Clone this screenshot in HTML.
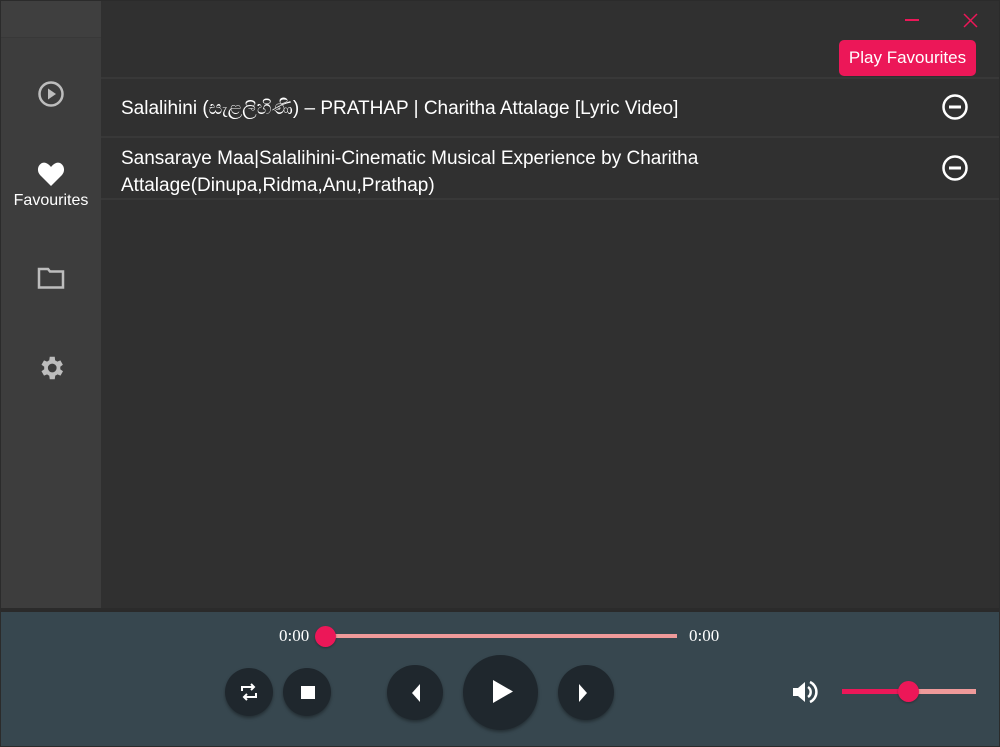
<!DOCTYPE html>
<html><head><meta charset="utf-8"><style>
*{margin:0;padding:0;box-sizing:border-box}
body{width:1000px;height:747px;background:#2b2b2b;font-family:"Liberation Sans","Noto Sans CJK SC",sans-serif;overflow:hidden;position:relative}
.side{position:absolute;left:1px;top:1px;width:100px;height:607px;background:#3d3d3d}
.side .top{height:37px;background:#3f3f3f;border-bottom:1px solid #383838}
.main{position:absolute;left:101px;top:1px;width:898px;height:607px;background:#303030}
.row{position:absolute;left:101px;width:898px;border-top:2px solid #383838;color:#fff;font-size:19px}
.btn{position:absolute;left:839px;top:40px;width:137px;height:36px;background:#ec1758;border-radius:5px;color:#fff;font-size:17px;text-align:center;line-height:36px}
.bar{position:absolute;left:1px;top:610px;width:998px;height:136px;background:#37474f;border-top:2px solid #2a2a2a}
.c{position:absolute;border-radius:50%;background:#1f272d;box-shadow:0 2px 3px rgba(0,0,0,.35)}
.t{position:absolute;color:#fff;font-family:"Liberation Serif",serif;font-size:17px}
</style></head><body>
<div class="side"><div class="top"></div></div>
<div class="main"></div>
<svg style="position:absolute;left:37px;top:80px" width="28" height="28" viewBox="0 0 28 28"><circle cx="14" cy="14" r="11.5" fill="none" stroke="#bdbdbd" stroke-width="2.5"/><path d="M11 8.5v11l8-5.5z" fill="#bdbdbd"/></svg>
<svg style="position:absolute;left:37px;top:161px" width="28" height="26" viewBox="0 0 28 26"><path d="M14 25L3 14C-2 8 3 0 9 2c2 .7 4 2.5 5 4 1-1.5 3-3.3 5-4 6-2 11 6 6 12z" fill="#fff"/></svg>
<div style="position:absolute;left:1px;top:192px;width:100px;text-align:center;color:#fff;font-size:16px">Favourites</div>
<svg style="position:absolute;left:37px;top:266px" width="28" height="24" viewBox="0 0 28 24"><path d="M2 3h9l2 2.5h13v16H2z" fill="none" stroke="#bdbdbd" stroke-width="2.5"/></svg>
<svg style="position:absolute;left:36px;top:353px" width="30" height="30" viewBox="0 0 24 24"><path fill="#bdbdbd" d="M19.4 13a7.5 7.5 0 000-2l2.1-1.6-2-3.5-2.5 1a7 7 0 00-1.7-1L15 3h-4l-.4 2.9a7 7 0 00-1.700 1l-2.5-1-2 3.5L6.6 11a7.5 7.5 0 000 2l-2.2 1.6 2 3.5 2.5-1a7 7 0 001.7 1L11 21h4l.4-2.9a7 7 0 001.7-1l2.5 1 2-3.5zM13 15.5a3.5 3.5 0 110-7 3.5 3.5 0 010 7z"/></svg>
<div style="position:absolute;left:905px;top:19px;width:14px;height:1.5px;background:#ec1758"></div>
<svg style="position:absolute;left:963px;top:13px" width="15" height="15"><path d="M1 1l13 13M14 1L1 14" stroke="#ec1758" stroke-width="1.5"/></svg>
<div class="btn">Play Favourites</div>
<div class="row" style="top:77px;height:60px;padding:19px 0 0 20px">Salalihini (සැළලිහිණි) – PRATHAP | Charitha Attalage [Lyric Video]</div>
<div class="row" style="top:136px;height:64px;border-bottom:2px solid #383838;padding:7px 0 0 20px;line-height:27px">Sansaraye Maa|Salalihini-Cinematic Musical Experience by Charitha<br>Attalage(Dinupa,Ridma,Anu,Prathap)</div>
<svg style="position:absolute;left:941px;top:93px" width="28" height="28"><circle cx="14" cy="14" r="11.5" fill="none" stroke="#fff" stroke-width="2.5"/><rect x="8" y="12.5" width="12" height="3" fill="#fff"/></svg>
<svg style="position:absolute;left:941px;top:154px" width="28" height="28"><circle cx="14" cy="14" r="11.5" fill="none" stroke="#fff" stroke-width="2.5"/><rect x="8" y="12.5" width="12" height="3" fill="#fff"/></svg>
<div class="bar"></div>
<div class="t" style="left:279px;top:626px">0:00</div>
<div class="t" style="left:689px;top:626px">0:00</div>
<div style="position:absolute;left:325px;top:634px;width:352px;height:4px;background:#ef9a9a"></div>
<div style="position:absolute;left:315px;top:626px;width:21px;height:21px;border-radius:50%;background:#ec1758;box-shadow:0 1px 2px rgba(0,0,0,.3)"></div>
<div class="c" style="left:225px;top:668px;width:48px;height:48px"></div>
<svg style="position:absolute;left:239px;top:682px" width="20" height="20" viewBox="0 0 20 20"><path d="M3 9V5h11M12 2l3 3-3 3M17 11v4H6M8 18l-3-3 3-3" fill="none" stroke="#fff" stroke-width="2"/></svg>
<div class="c" style="left:283px;top:668px;width:48px;height:48px"></div>
<div style="position:absolute;left:301px;top:686px;width:14px;height:13px;background:#fff"></div>
<div class="c" style="left:387px;top:665px;width:56px;height:55px"></div>
<svg style="position:absolute;left:409px;top:682px" width="14" height="22"><path d="M11 2v18L3 11z" fill="#fff"/></svg>
<div class="c" style="left:463px;top:655px;width:75px;height:75px"></div>
<svg style="position:absolute;left:490px;top:679px" width="26" height="26"><path d="M3 1v23l20-11.5z" fill="#fff"/></svg>
<div class="c" style="left:558px;top:665px;width:56px;height:55px"></div>
<svg style="position:absolute;left:577px;top:682px" width="14" height="22"><path d="M2 2v18l8-9z" fill="#fff"/></svg>
<svg style="position:absolute;left:791px;top:679px" width="28" height="26" viewBox="0 0 28 26"><path d="M2 9h5l7-6v20l-7-6H2z" fill="#fff"/><path d="M17 8a6 6 0 010 10" fill="none" stroke="#fff" stroke-width="2.5"/><path d="M19 3a11 11 0 010 20" fill="none" stroke="#fff" stroke-width="2.5"/></svg>
<div style="position:absolute;left:842px;top:689px;width:66px;height:5px;background:#ec1758"></div>
<div style="position:absolute;left:908px;top:689px;width:68px;height:5px;background:#ef9a9a"></div>
<div style="position:absolute;left:898px;top:681px;width:21px;height:21px;border-radius:50%;background:#ec1758;box-shadow:0 1px 2px rgba(0,0,0,.3)"></div>
</body></html>
